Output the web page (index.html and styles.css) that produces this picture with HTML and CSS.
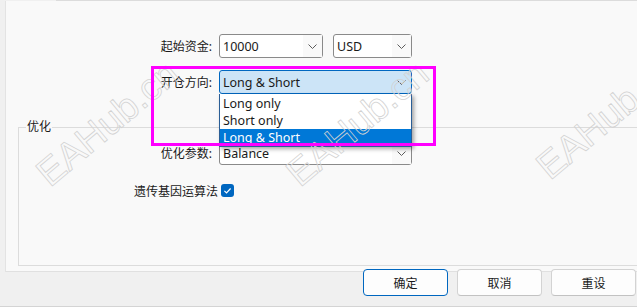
FILE: index.html
```html
<!DOCTYPE html>
<html lang="zh-CN">
<head>
    <meta charset="UTF-8">
    <title>测试设置</title>
    <link rel="stylesheet" href="styles.css">
</head>
<body>
    <div class="window">
        <div class="tab-line"></div>
        <div class="panel">
            <div class="row">
                <span class="label">起始资金:</span>
                <div class="combo deposit">
                    <span class="value">10000</span>
                    <span class="arrow"><svg width="9" height="5" viewBox="0 0 9 5"><polyline points="0.5,0.5 4.5,4.5 8.5,0.5" /></svg></span>
                </div>
                <div class="combo currency">
                    <span class="value">USD</span>
                    <span class="arrow"><svg width="9" height="5" viewBox="0 0 9 5"><polyline points="0.5,0.5 4.5,4.5 8.5,0.5" /></svg></span>
                </div>
            </div>
            <div class="row">
                <span class="label">开仓方向:</span>
                <div class="combo wide focused">
                    <span class="value">Long &amp; Short</span>
                    <span class="arrow"><svg width="9" height="5" viewBox="0 0 9 5"><polyline points="0.5,0.5 4.5,4.5 8.5,0.5" /></svg></span>
                    <ul class="dropdown">
                        <li>Long only</li>
                        <li>Short only</li>
                        <li class="selected">Long &amp; Short</li>
                    </ul>
                </div>
            </div>
            <fieldset class="group">
                <legend>优化</legend>
                <div class="row first">
                    <span class="label">优化参数:</span>
                    <div class="combo wide">
                        <span class="value">Balance</span>
                        <span class="arrow"><svg width="9" height="5" viewBox="0 0 9 5"><polyline points="0.5,0.5 4.5,4.5 8.5,0.5" /></svg></span>
                    </div>
                </div>
                <div class="row check-row">
                    <span class="label">遗传基因运算法</span>
                    <span class="checkbox"><svg width="13" height="13" viewBox="0 0 13 13"><rect width="13" height="13" rx="3" /><path d="M3.4 6.9 L5.5 8.9 L9.6 4.5" /></svg></span>
                </div>
            </fieldset>
        </div>
        <div class="buttons">
            <button class="btn primary">确定</button>
            <button class="btn">取消</button>
            <button class="btn">重设</button>
        </div>

        <span class="watermark wm1">EAHub.cn</span>
        <span class="watermark wm2">EAHub.cn</span>
        <span class="watermark wm3">EAHub.cn</span>
        <div class="highlight"></div>
    </div>
</body>
</html>
```

FILE: styles.css
```css
* {
    margin: 0;
    padding: 0;
    box-sizing: border-box;
}

body {
    background: #f0f0f0;
    font-family: "Noto Sans", "Noto Sans CJK SC", sans-serif;
    font-size: 12px;
    color: #1a1a1a;
    overflow: hidden;
}

.window {
    position: relative;
    width: 637px;
    height: 307px;
    overflow: hidden;
    border-bottom: 1px solid #d4d4d4;
}

.tab-line {
    height: 1px;
    margin-left: 56px;
    background: #dcdcdc;
}

.panel {
    display: flex;
    flex-direction: column;
    width: 680px;
    height: 271px;
    margin-left: 5px;
    padding: 33px 0 0 12px;
    background: #f9f9f9;
    border-left: 1px solid #e3e3e3;
    border-bottom: 1px solid #e0e0e0;
}

.row {
    display: flex;
    align-items: center;
    height: 24px;
}

.row + .row {
    margin-top: 12px;
}

.label {
    width: 194px;
    margin-right: 7px;
    text-align: right;
    white-space: nowrap;
}

.combo {
    position: relative;
    display: flex;
    align-items: center;
    height: 24px;
    background: #fff;
    border: 1px solid #8a8a8a;
    border-radius: 3px;
    font-size: 12.5px;
}

.combo .value {
    flex: 1;
    padding-left: 3px;
    white-space: nowrap;
}

.combo .arrow {
    display: flex;
    align-items: center;
    justify-content: center;
    width: 19px;
    height: 100%;
    background: #f9f9f9;
}

.combo .arrow polyline {
    fill: none;
    stroke: #5c5c5c;
    stroke-width: 1;
}

.deposit {
    width: 104px;
}

.currency {
    width: 79px;
    margin-left: 10px;
}

.wide {
    width: 193px;
}

.focused {
    background: #cce4f7;
    border-color: #0067c0;
}

.focused .arrow {
    background: transparent;
}

.dropdown {
    position: absolute;
    top: 23px;
    left: -1px;
    width: 193px;
    height: 53px;
    padding-top: 1px;
    list-style: none;
    background: #fff;
    border: 1px solid #2a5e96;
    border-top: none;
    box-shadow: 2px 2px 4px rgba(0, 0, 0, 0.35);
    z-index: 2;
}

.dropdown li {
    height: 17px;
    line-height: 17px;
    padding-left: 3px;
    white-space: nowrap;
}

.dropdown li.selected {
    background: #0078d7;
    color: #fff;
}

.group {
    flex: 1;
    margin: 25px 0 5px 0;
    padding: 0;
    min-width: 0;
    border: 1px solid #dcdcdc;
}

.group legend {
    margin-left: 7px;
    padding: 0 1px;
    line-height: 16px;
}

.group .label {
    width: 193px;
}

.group .row.first {
    margin-top: 6px;
}

.group .check-row {
    height: 13px;
    margin-top: 19px;
}

.check-row .label {
    width: 199px;
    margin-right: 3px;
}

.checkbox {
    display: flex;
}

.checkbox rect {
    fill: #0067c0;
}

.checkbox path {
    fill: none;
    stroke: #fff;
    stroke-width: 1.2;
}

.buttons {
    display: flex;
    justify-content: flex-end;
    gap: 9px;
    margin-top: -3px;
    padding-right: 1px;
}

.btn {
    width: 85px;
    height: 27px;
    background: #fdfdfd;
    border: 1px solid #d3d3d3;
    border-bottom-color: #c2c2c2;
    border-radius: 4px;
    font-family: inherit;
    font-size: 12px;
    color: #1a1a1a;
}

.btn.primary {
    border-color: #0067c0;
}

.watermark {
    position: absolute;
    font-family: "Liberation Sans", sans-serif;
    font-size: 38px;
    line-height: 38px;
    color: transparent;
    -webkit-text-stroke: 0.8px #d2d2d2;
    transform: rotate(-40deg);
    transform-origin: 0 32px;
    white-space: nowrap;
    pointer-events: none;
    z-index: 3;
}

.wm1 { left: 50px; top: 156px; }
.wm2 { left: 300px; top: 156px; }
.wm3 { left: 550px; top: 149px; }

.highlight {
    position: absolute;
    left: 151px;
    top: 66px;
    width: 285px;
    height: 80px;
    border: 3px solid #ff00ff;
    z-index: 4;
}
```
